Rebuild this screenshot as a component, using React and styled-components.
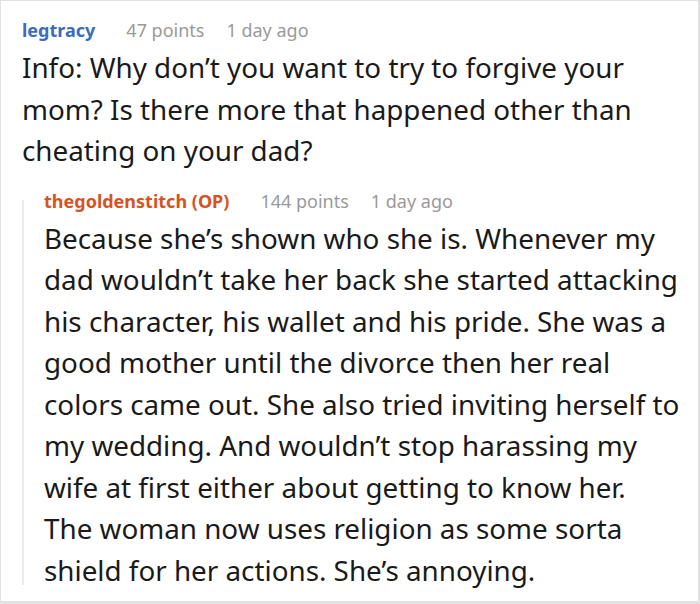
import React from "react";
import styled, { createGlobalStyle } from "styled-components";

const Global = createGlobalStyle`
  html, body { margin: 0; padding: 0; background: #fff; }
  body { font-family: "Noto Sans", "Open Sans", sans-serif; }
`;

const Frame = styled.div`
  box-sizing: border-box;
  width: 700px;
  height: 604px;
  overflow: hidden;
  border-style: solid;
  border-color: #e2e2e2;
  border-width: 1px 2px 3px 1px;
  padding: 16px 18px 0 21px;
`;

const Comment = styled.div`
  display: flex;
  flex-direction: column;
`;

const Meta = styled.div`
  display: flex;
  align-items: baseline;
  gap: 22px;
  font-size: 18px;
  line-height: 26px;
  color: #9a9a9a;
`;

const Author = styled.span`
  font-weight: 700;
  color: ${(p) => p.$color};
  margin-right: 9px;
`;

const Body = styled.p`
  margin: 4px 0 0;
  font-size: 27.8px;
  line-height: 41.5px;
  color: #1a1a1a;
`;

const Reply = styled.div`
  margin-top: 16px;
  display: flex;
`;

const Thread = styled.div`
  width: 2px;
  flex: none;
  background: #ebebeb;
  margin-top: 12px;
  height: 385px;
`;

const ReplyInner = styled.div`
  padding-left: 20px;
  flex: 1;
`;

export default function App() {
  return (
    <>
      <Global />
      <Frame>
        <Comment>
          <Meta>
            <Author $color="#3b6cbc">legtracy</Author>
            <span>47 points</span>
            <span>1 day ago</span>
          </Meta>
          <Body>
            Info: Why don’t you want to try to forgive your mom? Is there more that happened other than cheating on your dad?
          </Body>
        </Comment>
        <Reply>
          <Thread />
          <ReplyInner>
            <Meta>
              <Author $color="#d6531f">thegoldenstitch (OP)</Author>
              <span>144 points</span>
              <span>1 day ago</span>
            </Meta>
            <Body>
              Because she’s shown who she is. Whenever my dad wouldn’t take her back she started attacking his character, his wallet and his pride. She was a good mother until the divorce then her real colors came out. She also tried inviting herself to my wedding. And wouldn’t stop harassing my wife at first either about getting to know her. The woman now uses religion as some sorta shield for her actions. She’s annoying.
            </Body>
          </ReplyInner>
        </Reply>
      </Frame>
    </>
  );
}
